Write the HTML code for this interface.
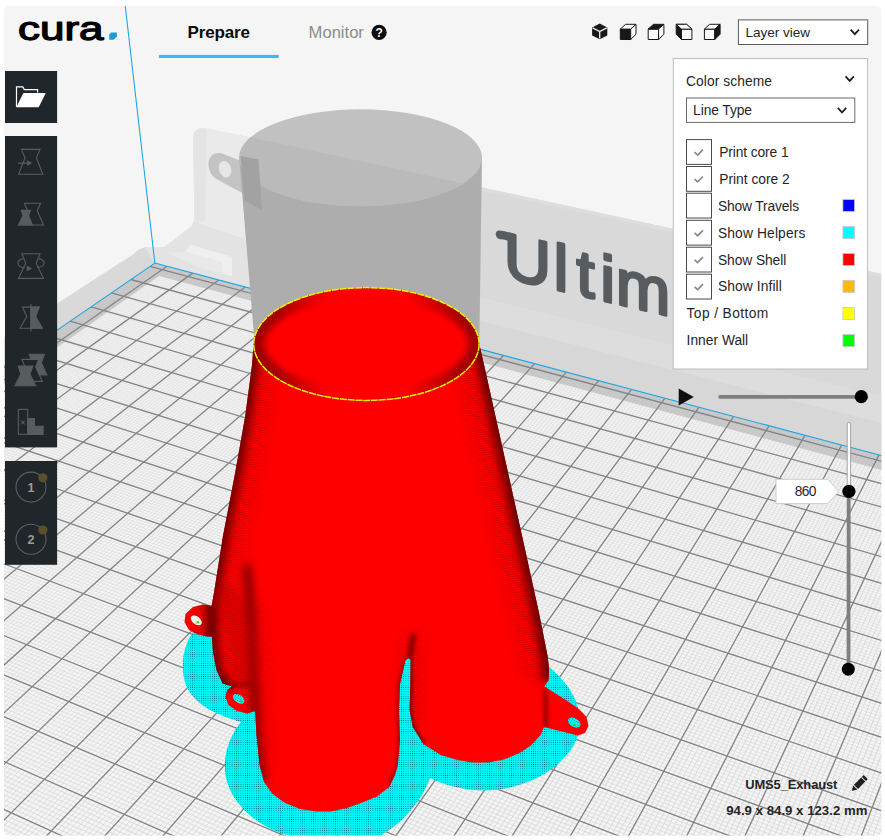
<!DOCTYPE html>
<html lang="en"><head><meta charset="utf-8"><title>Cura - UMS5_Exhaust</title>
<style>
html,body{margin:0;padding:0;background:#fff;width:885px;height:840px;overflow:hidden}
svg{display:block;position:absolute;left:0;top:0}
text{font-family:"Liberation Sans",Arial,sans-serif}
</style></head><body>
<svg width="885" height="840" viewBox="0 0 885 840">
<defs><clipPath id="win"><rect x="4" y="6" width="877.3" height="829.5" rx="5" ry="5"/></clipPath></defs>
<g clip-path="url(#win)">
<rect x="0" y="0" width="885" height="840" fill="#f5f5f5"/>
<polygon points="0.0,340.4 57.0,303.5 132.1,255.0 138.5,249.8 145.0,247.0 163.5,247.4 175.2,238.9 192.5,225.2 194.6,219.0 193.3,138.0 194.6,132.0 199.0,128.6 204.0,128.3 260.0,139.4 481.2,187.3 885.0,274.7 885.0,470.0 0.0,470.0" fill="#d9d9d9"/>
<polygon points="193.3,138.0 194.6,132.0 199.0,128.6 204.0,128.3 256.0,138.5 256.0,246.0 245.0,239.0 208.8,227.6 194.3,221.0" fill="#eaeaea"/>
<polygon points="193.3,138.0 194.6,132.0 199.0,128.6 204.0,128.3 206.5,129.5 205.0,222.0 194.3,221.0" fill="#e4e4e4"/>
<polygon points="145.0,247.0 163.5,247.4 175.2,238.9 192.5,225.2 194.3,221.0 208.8,227.6 245.0,239.0 256.0,246.0 256.0,292.0 154.0,263.1" fill="#e3e3e3"/>
<polygon points="186.0,252.0 190.0,244.5 232.0,257.0 232.0,276.0 222.0,273.5 222.0,262.0" fill="#efefef"/>
<polygon points="166.0,252.5 186.0,252.0 222.0,262.0 222.0,273.5 200.0,268.0" fill="#e9e9e9"/>
<polygon points="470.0,184.9 885.0,274.7 885.0,278.2 470.0,188.4" fill="#dddddd"/>
<polygon points="470.0,294.8 885.0,397.3 885.0,424.0 470.0,318.2" fill="#dddddd"/>
<polygon points="470.0,318.2 885.0,424.0 885.0,456.1 470.0,346.5" fill="#d7d7d7"/>
<clipPath id="plate"><polygon points="154.8,263.1 1273.4,559.4 1147.6,1620.9 -539.0,739.2"/></clipPath>
<g clip-path="url(#plate)">
<polygon points="154.8,263.1 1273.4,559.4 1147.6,1620.9 -539.0,739.2" fill="#f4f4f4"/>
<g stroke="#d6d6d7" fill="none">
<path stroke-width="0.3" d="M153.7,263.8L329.3,310.4M329.3,310.4L524.9,362.3M151.8,265.1L327.6,311.8M327.6,311.8L523.4,363.9M148.1,267.7L324.2,314.7M324.2,314.7L520.4,367.1M146.2,269.0L322.4,316.1M322.4,316.1L519.0,368.7M144.3,270.3L320.7,317.6M320.7,317.6L517.5,370.3M142.4,271.6L319.0,319.0M319.0,319.0L516.0,371.9M140.5,272.9L317.3,320.5M317.3,320.5L514.5,373.5M138.6,274.2L315.5,321.9M136.7,275.5L313.8,323.4M134.8,276.8L312.1,324.9M132.8,278.2L310.3,326.3M129.0,280.8L306.8,329.3M127.0,282.1L305.0,330.8M125.1,283.5L303.3,332.3M123.1,284.8L301.5,333.7M121.2,286.2L299.7,335.2M119.2,287.5L297.9,336.8M117.2,288.9L296.1,338.3M115.2,290.2L294.3,339.8M113.3,291.6L292.5,341.3"/>
<path stroke-width="0.35" d="M156.9,263.6L60.8,329.7M159.4,264.3L63.4,330.5M162.0,265.0L66.1,331.3M164.5,265.6L68.7,332.1M169.6,267.0L74.0,333.6M172.1,267.6L76.7,334.4M174.7,268.3L79.4,335.2M177.2,269.0L82.0,336.0M179.8,269.7L84.7,336.8M182.4,270.4L87.4,337.6M184.9,271.0L90.1,338.4M187.5,271.7L92.8,339.1M190.1,272.4L95.5,339.9M195.2,273.8L100.9,341.5M197.8,274.5L103.6,342.3M200.4,275.1L106.3,343.1M203.0,275.8L109.0,343.9M205.6,276.5L111.7,344.7M208.2,277.2L114.4,345.5M210.8,277.9L117.2,346.3M213.4,278.6L119.9,347.1M216.1,279.3L122.7,347.9M221.3,280.7L128.2,349.5M524.9,362.3L744.1,420.5M744.1,420.5L991.6,486.1M523.4,363.9L743.0,422.2M743.0,422.2L990.9,488.1M520.4,367.1L740.6,425.8M740.6,425.8L989.3,492.2M519.0,368.7L739.4,427.7M739.4,427.7L988.5,494.3M517.5,370.3L738.2,429.5M738.2,429.5L987.7,496.3M516.0,371.9L737.0,431.3M737.0,431.3L986.9,498.4M514.5,373.5L735.8,433.1M735.8,433.1L986.1,500.5M315.5,321.9L513.0,375.2M513.0,375.2L734.6,435.0M734.6,435.0L985.3,502.6M313.8,323.4L511.5,376.8M511.5,376.8L733.4,436.8M733.4,436.8L984.5,504.6M312.1,324.9L510.0,378.5M510.0,378.5L732.2,438.6M732.2,438.6L983.7,506.7M310.3,326.3L508.4,380.1M508.4,380.1L731.0,440.5M731.0,440.5L982.9,508.9M306.8,329.3L505.4,383.4M505.4,383.4L728.6,444.2M728.6,444.2L981.2,513.1M305.0,330.8L503.9,385.1M503.9,385.1L727.4,446.1M303.3,332.3L502.3,386.7M502.3,386.7L726.1,448.0M301.5,333.7L500.8,388.4M500.8,388.4L724.9,449.9M299.7,335.2L499.2,390.1M499.2,390.1L723.6,451.8M297.9,336.8L497.7,391.8M497.7,391.8L722.4,453.7M296.1,338.3L496.1,393.5M496.1,393.5L721.2,455.6M294.3,339.8L494.6,395.2M494.6,395.2L719.9,457.5M292.5,341.3L493.0,396.9M493.0,396.9L718.6,459.4M109.3,294.3L288.9,344.3M288.9,344.3L489.8,400.3M489.8,400.3L716.1,463.3M107.3,295.7L287.1,345.9M287.1,345.9L488.2,402.0M488.2,402.0L714.8,465.2M105.3,297.1L285.2,347.4M285.2,347.4L486.7,403.7M486.7,403.7L713.6,467.2M103.2,298.5L283.4,349.0M283.4,349.0L485.1,405.5M485.1,405.5L712.3,469.1M101.2,299.9L281.6,350.5M281.6,350.5L483.5,407.2M483.5,407.2L711.0,471.1M99.2,301.2L279.7,352.1M279.7,352.1L481.9,408.9M481.9,408.9L709.7,473.1M97.2,302.6L277.9,353.6M277.9,353.6L480.2,410.7M480.2,410.7L708.4,475.1M95.1,304.0L276.0,355.2M276.0,355.2L478.6,412.5M478.6,412.5L707.1,477.1M93.1,305.4L274.1,356.7M274.1,356.7L477.0,414.2M89.0,308.3L270.4,359.9M270.4,359.9L473.7,417.8M86.9,309.7L268.5,361.5M268.5,361.5L472.1,419.5M84.8,311.1L266.6,363.1M266.6,363.1L470.4,421.3M82.7,312.5L264.7,364.7M264.7,364.7L468.8,423.1M80.7,314.0L262.8,366.3M262.8,366.3L467.1,424.9M78.6,315.4L260.9,367.9M260.9,367.9L465.5,426.7M76.5,316.8L259.0,369.5M259.0,369.5L463.8,428.5M74.4,318.3L257.1,371.1M257.1,371.1L462.1,430.4M72.2,319.7L255.1,372.7M255.1,372.7L460.4,432.2M68.0,322.6L251.3,376.0M251.3,376.0L457.0,435.9M65.9,324.1L249.3,377.6M249.3,377.6L455.3,437.7M63.7,325.6L247.4,379.3M247.4,379.3L453.6,439.6M61.6,327.0L245.4,380.9M245.4,380.9L451.9,441.4M59.4,328.5L243.4,382.6M57.3,330.0L241.5,384.2M55.1,331.5L239.5,385.9M52.9,333.0L237.5,387.6M50.8,334.5L235.5,389.2M46.4,337.5L231.5,392.6M44.2,339.0L229.5,394.3M42.0,340.5L227.5,396.0M39.8,342.0L225.4,397.7M37.5,343.6L223.4,399.4M35.3,345.1L221.4,401.1M33.1,346.6L219.3,402.9M30.8,348.2L217.2,404.6M28.6,349.7L215.2,406.3"/>
<path stroke-width="0.4" d="M60.8,329.7L-51.3,406.9M63.4,330.5L-48.6,407.8M66.1,331.3L-45.8,408.7M68.7,332.1L-43.0,409.6M74.0,333.6L-37.5,411.4M76.7,334.4L-34.7,412.3M79.4,335.2L-31.9,413.3M82.0,336.0L-29.1,414.2M84.7,336.8L-26.3,415.1M87.4,337.6L-23.5,416.0M90.1,338.4L-20.7,417.0M92.8,339.1L-17.9,417.9M95.5,339.9L-15.1,418.8M100.9,341.5L-9.4,420.7M103.6,342.3L-6.6,421.6M106.3,343.1L-3.7,422.6M109.0,343.9L-0.9,423.5M111.7,344.7L2.0,424.4M114.4,345.5L4.8,425.4M117.2,346.3L7.7,426.3M119.9,347.1L10.5,427.3M122.7,347.9L13.4,428.2M128.2,349.5L19.2,430.1M223.9,281.4L130.9,350.4M130.9,350.4L22.1,431.1M226.6,282.1L133.7,351.2M133.7,351.2L25.0,432.0M229.2,282.8L136.4,352.0M136.4,352.0L27.9,433.0M231.8,283.5L139.2,352.8M139.2,352.8L30.8,433.9M234.5,284.2L142.0,353.6M142.0,353.6L33.7,434.9M237.1,284.9L144.8,354.4M144.8,354.4L36.6,435.9M239.8,285.6L147.5,355.2M147.5,355.2L39.5,436.8M242.4,286.3L150.3,356.1M150.3,356.1L42.4,437.8M247.8,287.7L155.9,357.7M155.9,357.7L48.3,439.7M250.4,288.4L158.7,358.5M158.7,358.5L51.2,440.7M253.1,289.1L161.5,359.4M161.5,359.4L54.2,441.7M255.8,289.8L164.3,360.2M164.3,360.2L57.2,442.7M258.5,290.5L167.2,361.0M167.2,361.0L60.1,443.6M261.2,291.2L170.0,361.8M170.0,361.8L63.1,444.6M263.9,291.9L172.8,362.7M172.8,362.7L66.0,445.6M266.6,292.7L175.6,363.5M269.3,293.4L178.5,364.3M274.7,294.8L184.2,366.0M277.4,295.5L187.0,366.8M280.1,296.3L189.9,367.7M282.8,297.0L192.7,368.5M285.6,297.7L195.6,369.4M288.3,298.4L198.5,370.2M291.0,299.1L201.3,371.1M293.8,299.9L204.2,371.9M296.5,300.6L207.1,372.8M302.0,302.1L212.9,374.5M304.8,302.8L215.8,375.3M307.5,303.5L218.7,376.2M310.3,304.2L221.6,377.0M313.1,305.0L224.5,377.9M315.8,305.7L227.5,378.7M318.6,306.5L230.4,379.6M321.4,307.2L233.3,380.5M324.2,307.9L236.3,381.3M329.8,309.4L242.2,383.1M332.6,310.2L245.1,383.9M335.4,310.9L248.1,384.8M338.2,311.6L251.0,385.7M341.0,312.4L254.0,386.5M343.9,313.1L257.0,387.4M727.4,446.1L980.4,515.2M726.1,448.0L979.6,517.4M724.9,449.9L978.7,519.5M723.6,451.8L977.9,521.7M722.4,453.7L977.1,523.8M721.2,455.6L976.2,526.0M719.9,457.5L975.4,528.2M718.6,459.4L974.6,530.4M716.1,463.3L972.9,534.8M714.8,465.2L972.0,537.0M713.6,467.2L971.1,539.2M712.3,469.1L970.3,541.4M711.0,471.1L969.4,543.7M709.7,473.1L968.5,545.9M708.4,475.1L967.7,548.2M707.1,477.1L966.8,550.5M477.0,414.2L705.8,479.0M705.8,479.0L965.9,552.7M473.7,417.8L703.2,483.1M703.2,483.1L964.1,557.3M472.1,419.5L701.9,485.1M701.9,485.1L963.3,559.6M470.4,421.3L700.5,487.1M700.5,487.1L962.4,561.9M468.8,423.1L699.2,489.1M699.2,489.1L961.5,564.3M467.1,424.9L697.9,491.2M697.9,491.2L960.6,566.6M465.5,426.7L696.5,493.2M696.5,493.2L959.7,568.9M463.8,428.5L695.2,495.3M695.2,495.3L958.7,571.3M462.1,430.4L693.8,497.3M693.8,497.3L957.8,573.6M460.4,432.2L692.5,499.4M692.5,499.4L956.9,576.0M457.0,435.9L689.8,503.6M689.8,503.6L955.1,580.8M455.3,437.7L688.4,505.7M688.4,505.7L954.2,583.2M453.6,439.6L687.0,507.8M687.0,507.8L953.2,585.6M451.9,441.4L685.6,509.9M243.4,382.6L450.2,443.3M450.2,443.3L684.3,512.0M241.5,384.2L448.5,445.1M448.5,445.1L682.9,514.1M239.5,385.9L446.8,447.0M446.8,447.0L681.5,516.3M237.5,387.6L445.0,448.9M445.0,448.9L680.1,518.4M235.5,389.2L443.3,450.8M443.3,450.8L678.7,520.6M231.5,392.6L439.8,454.6M439.8,454.6L675.8,524.9M229.5,394.3L438.0,456.5M438.0,456.5L674.4,527.1M227.5,396.0L436.2,458.4M436.2,458.4L673.0,529.2M225.4,397.7L434.5,460.4M434.5,460.4L671.5,531.4M223.4,399.4L432.7,462.3M432.7,462.3L670.1,533.6M221.4,401.1L430.9,464.2M430.9,464.2L668.7,535.9M219.3,402.9L429.1,466.2M429.1,466.2L667.2,538.1M217.2,404.6L427.3,468.1M427.3,468.1L665.7,540.3M215.2,406.3L425.5,470.1M425.5,470.1L664.3,542.5M24.0,352.8L211.0,409.8M211.0,409.8L421.8,474.1M21.8,354.4L208.9,411.6M208.9,411.6L420.0,476.0M19.5,355.9L206.9,413.3M206.9,413.3L418.2,478.0M17.2,357.5L204.8,415.1M204.8,415.1L416.3,480.0M14.9,359.1L202.6,416.9M202.6,416.9L414.5,482.0M12.6,360.7L200.5,418.6M200.5,418.6L412.6,484.0M10.3,362.3L198.4,420.4M198.4,420.4L410.8,486.1M8.0,363.8L196.3,422.2M196.3,422.2L408.9,488.1M5.6,365.4L194.1,424.0M194.1,424.0L407.0,490.1M1.0,368.7L189.8,427.6M189.8,427.6L403.3,494.2M-1.4,370.3L187.7,429.4M187.7,429.4L401.4,496.3M-3.7,371.9L185.5,431.3M185.5,431.3L399.4,498.4M-6.1,373.5L183.3,433.1M183.3,433.1L397.5,500.4M-8.5,375.1L181.2,434.9M181.2,434.9L395.6,502.5M-10.9,376.8L179.0,436.8M-13.3,378.4L176.8,438.6M-15.7,380.1L174.6,440.5M-18.1,381.7L172.4,442.3M-22.9,385.0L167.9,446.1M-25.3,386.7L165.7,447.9M-27.8,388.4L163.4,449.8M-30.2,390.1L161.2,451.7M-32.7,391.7L158.9,453.6M-35.1,393.4L156.6,455.5M-37.6,395.1L154.4,457.5M-40.1,396.8L152.1,459.4M-42.6,398.5L149.8,461.3M-47.6,402.0L145.2,465.2"/>
<path stroke-width="0.45" d="M2.0,424.4L-128.1,518.9M4.8,425.4L-125.1,520.0M7.7,426.3L-122.1,521.1M10.5,427.3L-119.1,522.3M13.4,428.2L-116.1,523.4M19.2,430.1L-110.0,525.7M22.1,431.1L-107.0,526.8M25.0,432.0L-104.0,527.9M27.9,433.0L-100.9,529.1M30.8,433.9L-97.9,530.2M33.7,434.9L-94.8,531.4M36.6,435.9L-91.8,532.5M39.5,436.8L-88.7,533.7M42.4,437.8L-85.7,534.8M48.3,439.7L-79.5,537.2M51.2,440.7L-76.4,538.3M54.2,441.7L-73.3,539.5M57.2,442.7L-70.2,540.7M60.1,443.6L-67.1,541.8M63.1,444.6L-64.0,543.0M66.0,445.6L-60.9,544.2M175.6,363.5L69.0,446.6M69.0,446.6L-57.7,545.3M178.5,364.3L72.0,447.6M72.0,447.6L-54.6,546.5M184.2,366.0L78.0,449.5M78.0,449.5L-48.3,548.9M187.0,366.8L81.0,450.5M81.0,450.5L-45.2,550.1M189.9,367.7L84.0,451.5M84.0,451.5L-42.0,551.3M192.7,368.5L87.0,452.5M87.0,452.5L-38.8,552.5M195.6,369.4L90.0,453.5M90.0,453.5L-35.7,553.6M198.5,370.2L93.0,454.5M93.0,454.5L-32.5,554.8M201.3,371.1L96.1,455.5M204.2,371.9L99.1,456.5M207.1,372.8L102.1,457.5M212.9,374.5L108.2,459.5M215.8,375.3L111.3,460.5M218.7,376.2L114.3,461.5M221.6,377.0L117.4,462.5M224.5,377.9L120.5,463.6M227.5,378.7L123.6,464.6M230.4,379.6L126.6,465.6M233.3,380.5L129.7,466.6M236.3,381.3L132.8,467.6M242.2,383.1L139.0,469.7M245.1,383.9L142.2,470.7M248.1,384.8L145.3,471.7M251.0,385.7L148.4,472.8M254.0,386.5L151.5,473.8M257.0,387.4L154.7,474.8M346.7,313.9L260.0,388.3M260.0,388.3L157.8,475.9M349.5,314.6L262.9,389.2M262.9,389.2L161.0,476.9M352.3,315.4L265.9,390.0M265.9,390.0L164.1,478.0M358.0,316.9L271.9,391.8M271.9,391.8L170.5,480.1M360.9,317.7L274.9,392.7M274.9,392.7L173.6,481.1M363.7,318.4L277.9,393.6M277.9,393.6L176.8,482.2M366.6,319.2L281.0,394.5M281.0,394.5L180.0,483.2M369.5,319.9L284.0,395.3M284.0,395.3L183.2,484.3M372.3,320.7L287.0,396.2M287.0,396.2L186.4,485.3M375.2,321.4L290.0,397.1M378.1,322.2L293.1,398.0M381.0,323.0L296.1,398.9M386.7,324.5L302.2,400.7M389.6,325.3L305.3,401.6M392.5,326.0L308.4,402.5M395.5,326.8L311.4,403.4M398.4,327.6L314.5,404.3M401.3,328.4L317.6,405.2M404.2,329.1L320.7,406.1M407.1,329.9L323.8,407.0M410.1,330.7L326.9,408.0M415.9,332.2L333.1,409.8M418.9,333.0L336.2,410.7M421.8,333.8L339.3,411.6M424.8,334.6L342.5,412.5M427.8,335.4L345.6,413.5M430.7,336.1L348.7,414.4M433.7,336.9L351.9,415.3M436.7,337.7L355.0,416.2M439.6,338.5L358.2,417.2M445.6,340.1L364.5,419.0M448.6,340.9L367.7,419.9M451.6,341.7L370.9,420.9M454.6,342.5L374.0,421.8M685.6,509.9L952.3,588.0M684.3,512.0L951.4,590.4M682.9,514.1L950.4,592.9M681.5,516.3L949.5,595.3M680.1,518.4L948.5,597.8M678.7,520.6L947.6,600.2M675.8,524.9L945.6,605.2M674.4,527.1L944.7,607.7M673.0,529.2L943.7,610.2M671.5,531.4L942.7,612.7M670.1,533.6L941.8,615.3M668.7,535.9L940.8,617.8M667.2,538.1L939.8,620.4M665.7,540.3L938.8,622.9M664.3,542.5L937.8,625.5M421.8,474.1L661.3,547.0M661.3,547.0L935.8,630.7M420.0,476.0L659.9,549.3M659.9,549.3L934.8,633.3M418.2,478.0L658.4,551.6M658.4,551.6L933.8,635.9M416.3,480.0L656.9,553.9M656.9,553.9L932.8,638.5M414.5,482.0L655.4,556.1M655.4,556.1L931.8,641.2M412.6,484.0L653.9,558.4M653.9,558.4L930.7,643.8M410.8,486.1L652.4,560.8M652.4,560.8L929.7,646.5M408.9,488.1L650.9,563.1M650.9,563.1L928.7,649.2M407.0,490.1L649.3,565.4M649.3,565.4L927.6,651.8M403.3,494.2L646.3,570.1M401.4,496.3L644.7,572.4M399.4,498.4L643.2,574.8M397.5,500.4L641.6,577.2M395.6,502.5L640.1,579.6M179.0,436.8L393.7,504.6M393.7,504.6L638.5,582.0M176.8,438.6L391.8,506.7M391.8,506.7L636.9,584.4M174.6,440.5L389.8,508.8M389.8,508.8L635.4,586.8M172.4,442.3L387.9,510.9M387.9,510.9L633.8,589.2M167.9,446.1L383.9,515.2M383.9,515.2L630.6,594.1M165.7,447.9L382.0,517.3M382.0,517.3L629.0,596.5M163.4,449.8L380.0,519.5M380.0,519.5L627.4,599.0M161.2,451.7L378.0,521.6M378.0,521.6L625.8,601.5M158.9,453.6L376.0,523.8M376.0,523.8L624.1,603.9M156.6,455.5L374.0,525.9M374.0,525.9L622.5,606.4M154.4,457.5L372.0,528.1M152.1,459.4L370.0,530.3M149.8,461.3L368.0,532.5M145.2,465.2L363.9,536.9M-50.1,403.7L142.8,467.1M142.8,467.1L361.8,539.2M-52.6,405.4L140.5,469.1M140.5,469.1L359.8,541.4M-55.2,407.2L138.2,471.1M138.2,471.1L357.7,543.6M-57.7,408.9L135.8,473.0M135.8,473.0L355.6,545.9M-60.2,410.7L133.5,475.0M133.5,475.0L353.6,548.1M-62.8,412.4L131.1,477.0M131.1,477.0L351.5,550.4M-65.4,414.2L128.7,479.0M128.7,479.0L349.4,552.7M-67.9,415.9L126.3,481.0M126.3,481.0L347.3,555.0M-73.1,419.5L121.6,485.0M121.6,485.0L343.0,559.6M-75.7,421.3L119.1,487.1M119.1,487.1L340.9,561.9M-78.3,423.1L116.7,489.1M-81.0,424.9L114.3,491.1M-83.6,426.7L111.9,493.2M-86.2,428.5L109.4,495.2M-88.9,430.3L107.0,497.3M-91.6,432.1L104.5,499.4M-94.2,434.0L102.0,501.4M-99.6,437.7L97.1,505.6M-102.3,439.5L94.6,507.7M-105.0,441.4L92.1,509.8M-107.7,443.2L89.5,512.0M-110.4,445.1L87.0,514.1M-113.2,447.0L84.5,516.2M-115.9,448.9L81.9,518.4"/>
<path stroke-width="0.5" d="M96.1,455.5L-29.3,556.0M99.1,456.5L-26.1,557.2M102.1,457.5L-22.9,558.4M108.2,459.5L-16.5,560.9M111.3,460.5L-13.3,562.1M114.3,461.5L-10.1,563.3M117.4,462.5L-6.8,564.5M120.5,463.6L-3.6,565.7M123.6,464.6L-0.3,566.9M126.6,465.6L2.9,568.2M129.7,466.6L6.2,569.4M132.8,467.6L9.4,570.6M139.0,469.7L16.0,573.1M142.2,470.7L19.3,574.3M145.3,471.7L22.6,575.6M148.4,472.8L25.9,576.8M151.5,473.8L29.2,578.0M154.7,474.8L32.5,579.3M157.8,475.9L35.8,580.5M161.0,476.9L39.1,581.8M164.1,478.0L42.5,583.1M170.5,480.1L49.2,585.6M173.6,481.1L52.5,586.8M176.8,482.2L55.9,588.1M180.0,483.2L59.3,589.4M183.2,484.3L62.6,590.6M186.4,485.3L66.0,591.9M290.0,397.1L189.6,486.4M189.6,486.4L69.4,593.2M293.1,398.0L192.8,487.4M192.8,487.4L72.8,594.5M296.1,398.9L196.0,488.5M196.0,488.5L76.2,595.8M302.2,400.7L202.5,490.6M305.3,401.6L205.7,491.7M308.4,402.5L209.0,492.8M311.4,403.4L212.2,493.8M314.5,404.3L215.5,494.9M317.6,405.2L218.8,496.0M320.7,406.1L222.0,497.1M323.8,407.0L225.3,498.2M326.9,408.0L228.6,499.2M333.1,409.8L235.2,501.4M336.2,410.7L238.5,502.5M339.3,411.6L241.8,503.6M342.5,412.5L245.1,504.7M345.6,413.5L248.4,505.8M348.7,414.4L251.8,506.9M351.9,415.3L255.1,508.0M355.0,416.2L258.4,509.1M358.2,417.2L261.8,510.2M364.5,419.0L268.5,512.4M367.7,419.9L271.9,513.5M370.9,420.9L275.2,514.6M374.0,421.8L278.6,515.8M457.6,343.3L377.2,422.8M377.2,422.8L282.0,516.9M460.7,344.1L380.4,423.7M380.4,423.7L285.4,518.0M463.7,344.9L383.6,424.6M383.6,424.6L288.8,519.1M466.7,345.7L386.8,425.6M386.8,425.6L292.2,520.2M469.7,346.5L390.1,426.5M390.1,426.5L295.6,521.4M475.8,348.1L396.5,428.4M478.9,348.9L399.7,429.4M481.9,349.7L403.0,430.3M485.0,350.5L406.2,431.3M488.0,351.3L409.5,432.2M491.1,352.1L412.7,433.2M494.2,353.0L416.0,434.1M497.3,353.8L419.3,435.1M500.3,354.6L422.5,436.1M506.5,356.2L429.1,438.0M509.6,357.1L432.4,439.0M512.7,357.9L435.7,439.9M515.8,358.7L439.0,440.9M519.0,359.5L442.3,441.9M522.1,360.4L445.6,442.9M525.2,361.2L449.0,443.8M528.3,362.0L452.3,444.8M531.5,362.8L455.6,445.8M537.8,364.5L462.3,447.8M540.9,365.3L465.7,448.7M544.1,366.2L469.0,449.7M547.2,367.0L472.4,450.7M550.4,367.9L475.8,451.7M553.6,368.7L479.2,452.7M556.8,369.5L482.5,453.7M560.0,370.4L485.9,454.7M646.3,570.1L925.5,657.3M644.7,572.4L924.5,660.0M643.2,574.8L923.4,662.7M641.6,577.2L922.4,665.4M640.1,579.6L921.3,668.2M638.5,582.0L920.2,671.0M636.9,584.4L919.2,673.8M635.4,586.8L918.1,676.5M633.8,589.2L917.0,679.3M630.6,594.1L914.8,685.0M629.0,596.5L913.7,687.8M627.4,599.0L912.6,690.7M625.8,601.5L911.5,693.6M624.1,603.9L910.4,696.4M622.5,606.4L909.3,699.3M372.0,528.1L620.9,608.9M620.9,608.9L908.2,702.2M370.0,530.3L619.2,611.5M619.2,611.5L907.0,705.2M368.0,532.5L617.6,614.0M617.6,614.0L905.9,708.1M363.9,536.9L614.2,619.1M614.2,619.1L903.6,714.0M361.8,539.2L612.6,621.6M612.6,621.6L902.5,717.0M359.8,541.4L610.9,624.2M357.7,543.6L609.2,626.8M355.6,545.9L607.5,629.4M353.6,548.1L605.8,632.0M351.5,550.4L604.1,634.6M349.4,552.7L602.4,637.2M347.3,555.0L600.7,639.8M343.0,559.6L597.2,645.1M340.9,561.9L595.5,647.8M116.7,489.1L338.7,564.2M338.7,564.2L593.7,650.5M114.3,491.1L336.6,566.5M336.6,566.5L591.9,653.2M111.9,493.2L334.4,568.9M334.4,568.9L590.2,655.9M109.4,495.2L332.3,571.2M332.3,571.2L588.4,658.6M107.0,497.3L330.1,573.6M330.1,573.6L586.6,661.3M104.5,499.4L327.9,576.0M327.9,576.0L584.8,664.0M102.0,501.4L325.7,578.3M325.7,578.3L583.0,666.8M97.1,505.6L321.3,583.1M94.6,507.7L319.1,585.5M92.1,509.8L316.9,588.0M89.5,512.0L314.6,590.4M87.0,514.1L312.4,592.8M84.5,516.2L310.1,595.3M81.9,518.4L307.9,597.7M-118.7,450.8L79.4,520.5M79.4,520.5L305.6,600.2M-121.4,452.7L76.8,522.7M76.8,522.7L303.3,602.7M-127.0,456.5L71.6,527.0M71.6,527.0L298.7,607.7M-129.8,458.4L69.0,529.2M69.0,529.2L296.4,610.2M-132.6,460.3L66.4,531.4M66.4,531.4L294.1,612.7M-135.4,462.3L63.8,533.6M63.8,533.6L291.7,615.2M-138.3,464.2L61.2,535.8M61.2,535.8L289.4,617.8M-141.1,466.1L58.5,538.0M-143.9,468.1L55.9,540.3M-146.8,470.1L53.2,542.5M-149.7,472.0L50.5,544.7M-155.4,476.0L45.2,549.2M-158.3,478.0L42.5,551.5M-161.3,480.0L39.8,553.8M-164.2,482.0L37.0,556.1M-167.1,484.0L34.3,558.4M-170.1,486.0L31.6,560.7M-173.0,488.0L28.8,563.0M-176.0,490.1L26.0,565.3M-179.0,492.1L23.2,567.7"/>
<path stroke-width="0.55" d="M2.9,568.2L-147.2,692.6M6.2,569.4L-143.8,694.1M9.4,570.6L-140.3,695.6M16.0,573.1L-133.4,698.6M19.3,574.3L-130.0,700.2M22.6,575.6L-126.5,701.7M25.9,576.8L-123.0,703.2M29.2,578.0L-119.5,704.7M32.5,579.3L-116.0,706.3M35.8,580.5L-112.5,707.8M39.1,581.8L-109.0,709.3M42.5,583.1L-105.5,710.9M49.2,585.6L-98.4,714.0M52.5,586.8L-94.9,715.5M55.9,588.1L-91.3,717.1M59.3,589.4L-87.8,718.6M62.6,590.6L-84.2,720.2M66.0,591.9L-80.6,721.8M69.4,593.2L-77.0,723.3M202.5,490.6L83.1,598.3M205.7,491.7L86.5,599.6M209.0,492.8L89.9,600.9M212.2,493.8L93.4,602.2M215.5,494.9L96.8,603.5M218.8,496.0L100.3,604.8M222.0,497.1L103.8,606.1M225.3,498.2L107.2,607.4M228.6,499.2L110.7,608.7M235.2,501.4L117.7,611.4M238.5,502.5L121.2,612.7M241.8,503.6L124.7,614.0M245.1,504.7L128.2,615.3M248.4,505.8L131.8,616.7M251.8,506.9L135.3,618.0M255.1,508.0L138.9,619.3M258.4,509.1L142.4,620.7M261.8,510.2L146.0,622.0M268.5,512.4L153.1,624.7M271.9,513.5L156.7,626.0M275.2,514.6L160.3,627.4M278.6,515.8L163.9,628.7M282.0,516.9L167.5,630.1M285.4,518.0L171.1,631.4M288.8,519.1L174.7,632.8M292.2,520.2L178.3,634.2M295.6,521.4L182.0,635.5M396.5,428.4L302.5,523.6M399.7,429.4L305.9,524.8M403.0,430.3L309.4,525.9M406.2,431.3L312.8,527.0M409.5,432.2L316.3,528.2M412.7,433.2L319.8,529.3M416.0,434.1L323.2,530.5M419.3,435.1L326.7,531.6M422.5,436.1L330.2,532.8M429.1,438.0L337.2,535.1M432.4,439.0L340.7,536.2M435.7,439.9L344.2,537.4M439.0,440.9L347.7,538.6M442.3,441.9L351.3,539.7M445.6,442.9L354.8,540.9M449.0,443.8L358.3,542.1M452.3,444.8L361.9,543.2M455.6,445.8L365.5,544.4M462.3,447.8L372.6,546.8M465.7,448.7L376.2,547.9M469.0,449.7L379.8,549.1M472.4,450.7L383.4,550.3M475.8,451.7L387.0,551.5M479.2,452.7L390.6,552.7M482.5,453.7L394.2,553.9M485.9,454.7L397.8,555.1M563.1,371.2L489.3,455.7M489.3,455.7L401.5,556.3M569.5,372.9L496.2,457.7M572.8,373.8L499.6,458.7M576.0,374.6L503.0,459.7M579.2,375.5L506.4,460.7M582.4,376.3L509.9,461.7M585.6,377.2L513.3,462.8M588.9,378.1L516.8,463.8M592.1,378.9L520.2,464.8M595.4,379.8L523.7,465.8M601.9,381.5L530.7,467.8M605.2,382.4L534.1,468.9M608.4,383.2L537.6,469.9M611.7,384.1L541.1,470.9M615.0,385.0L544.6,472.0M618.3,385.8L548.1,473.0M621.6,386.7L551.7,474.0M624.9,387.6L555.2,475.1M628.2,388.5L558.7,476.1M634.8,390.2L565.8,478.2M638.1,391.1L569.4,479.2M641.5,392.0L572.9,480.3M644.8,392.9L576.5,481.3M648.2,393.8L580.1,482.4M651.5,394.6L583.6,483.4M654.9,395.5L587.2,484.5M658.2,396.4L590.8,485.5M661.6,397.3L594.4,486.6M610.9,624.2L901.3,719.9M609.2,626.8L900.2,722.9M607.5,629.4L899.0,726.0M605.8,632.0L897.8,729.0M604.1,634.6L896.7,732.0M602.4,637.2L895.5,735.1M600.7,639.8L894.3,738.1M597.2,645.1L891.9,744.3M595.5,647.8L890.7,747.4M593.7,650.5L889.5,750.6M591.9,653.2L888.3,753.7M590.2,655.9L887.1,756.9M588.4,658.6L885.8,760.0M586.6,661.3L884.6,763.2M584.8,664.0L883.4,766.4M583.0,666.8L882.1,769.6M321.3,583.1L579.4,672.3M579.4,672.3L879.6,776.1M319.1,585.5L577.6,675.1M577.6,675.1L878.4,779.4M316.9,588.0L575.8,677.9M314.6,590.4L573.9,680.7M312.4,592.8L572.1,683.5M310.1,595.3L570.2,686.4M307.9,597.7L568.4,689.2M305.6,600.2L566.5,692.1M303.3,602.7L564.6,695.0M298.7,607.7L560.8,700.7M296.4,610.2L558.9,703.7M294.1,612.7L557.0,706.6M291.7,615.2L555.1,709.5M289.4,617.8L553.2,712.5M58.5,538.0L287.0,620.3M287.0,620.3L551.2,715.4M55.9,540.3L284.7,622.9M284.7,622.9L549.3,718.4M53.2,542.5L282.3,625.4M282.3,625.4L547.3,721.4M50.5,544.7L279.9,628.0M279.9,628.0L545.3,724.4M45.2,549.2L275.1,633.2M42.5,551.5L272.7,635.8M39.8,553.8L270.3,638.5M37.0,556.1L267.9,641.1M34.3,558.4L265.4,643.8M31.6,560.7L263.0,646.4M28.8,563.0L260.5,649.1M26.0,565.3L258.0,651.8M23.2,567.7L255.5,654.5M-184.9,496.2L17.7,572.4M17.7,572.4L250.5,659.9M-188.0,498.3L14.8,574.7M14.8,574.7L248.0,662.6M-191.0,500.4L12.0,577.1M12.0,577.1L245.5,665.4M-194.0,502.5L9.2,579.5M9.2,579.5L243.0,668.1M-197.1,504.5L6.3,581.9M6.3,581.9L240.4,670.9M-200.1,506.6L3.5,584.3M-203.2,508.8L0.6,586.7"/>
<path stroke-width="0.6" d="M72.8,594.5L-73.4,724.9M76.2,595.8L-69.8,726.5M83.1,598.3L-62.6,729.7M86.5,599.6L-58.9,731.2M89.9,600.9L-55.3,732.8M93.4,602.2L-51.7,734.4M96.8,603.5L-48.0,736.0M100.3,604.8L-44.3,737.6M103.8,606.1L-40.6,739.2M107.2,607.4L-37.0,740.9M110.7,608.7L-33.3,742.5M117.7,611.4L-25.9,745.7M121.2,612.7L-22.1,747.3M124.7,614.0L-18.4,749.0M128.2,615.3L-14.7,750.6M131.8,616.7L-10.9,752.3M135.3,618.0L-7.2,753.9M138.9,619.3L-3.4,755.6M142.4,620.7L0.4,757.2M146.0,622.0L4.2,758.9M153.1,624.7L11.8,762.2M156.7,626.0L15.6,763.9M160.3,627.4L19.4,765.5M302.5,523.6L189.3,638.3M305.9,524.8L193.0,639.7M309.4,525.9L196.6,641.1M312.8,527.0L200.3,642.4M316.3,528.2L204.0,643.8M319.8,529.3L207.7,645.2M323.2,530.5L211.4,646.6M326.7,531.6L215.1,648.0M330.2,532.8L218.8,649.4M337.2,535.1L226.3,652.2M340.7,536.2L230.0,653.6M344.2,537.4L233.8,655.0M347.7,538.6L237.6,656.5M351.3,539.7L241.3,657.9M354.8,540.9L245.1,659.3M358.3,542.1L248.9,660.7M361.9,543.2L252.7,662.2M365.5,544.4L256.5,663.6M372.6,546.8L264.1,666.5M376.2,547.9L268.0,667.9M379.8,549.1L271.8,669.3M383.4,550.3L275.7,670.8M387.0,551.5L279.5,672.2M390.6,552.7L283.4,673.7M496.2,457.7L408.7,558.7M499.6,458.7L412.4,559.9M503.0,459.7L416.1,561.1M506.4,460.7L419.7,562.3M509.9,461.7L423.4,563.5M513.3,462.8L427.1,564.8M516.8,463.8L430.8,566.0M520.2,464.8L434.5,567.2M523.7,465.8L438.2,568.4M530.7,467.8L445.6,570.9M534.1,468.9L449.4,572.1M537.6,469.9L453.1,573.3M541.1,470.9L456.9,574.6M544.6,472.0L460.6,575.8M548.1,473.0L464.4,577.1M551.7,474.0L468.2,578.3M555.2,475.1L471.9,579.6M558.7,476.1L475.7,580.8M565.8,478.2L483.3,583.3M569.4,479.2L487.1,584.6M572.9,480.3L491.0,585.8M576.5,481.3L494.8,587.1M580.1,482.4L498.6,588.4M583.6,483.4L502.5,589.6M587.2,484.5L506.3,590.9M668.3,399.1L601.7,488.7M671.7,400.0L605.3,489.8M675.1,400.9L608.9,490.8M678.5,401.8L612.6,491.9M681.9,402.7L616.2,493.0M685.3,403.6L619.8,494.1M688.7,404.5L623.5,495.1M692.2,405.4L627.2,496.2M695.6,406.3L630.8,497.3M702.5,408.1L638.2,499.5M705.9,409.1L641.9,500.5M709.4,410.0L645.6,501.6M712.8,410.9L649.3,502.7M716.3,411.8L653.0,503.8M719.7,412.7L656.8,504.9M723.2,413.6L660.5,506.0M726.7,414.6L664.2,507.1M730.2,415.5L668.0,508.2M737.2,417.3L675.5,510.4M740.7,418.3L679.3,511.5M744.2,419.2L683.1,512.6M747.7,420.1L686.8,513.8M751.3,421.1L690.6,514.9M754.8,422.0L694.4,516.0M758.4,422.9L698.2,517.1M761.9,423.9L702.1,518.2M765.5,424.8L705.9,519.3M889.5,750.6L1236.8,868.1M888.3,753.7L1236.4,871.8M887.1,756.9L1235.9,875.5M885.8,760.0L1235.5,879.3M884.6,763.2L1235.1,883.0M883.4,766.4L1234.6,886.8M882.1,769.6L1234.2,890.6M879.6,776.1L1233.2,898.3M878.4,779.4L1232.8,902.2M575.8,677.9L877.1,782.6M573.9,680.7L875.8,785.9M572.1,683.5L874.6,789.2M570.2,686.4L873.3,792.5M568.4,689.2L872.0,795.9M566.5,692.1L870.7,799.2M564.6,695.0L869.4,802.6M560.8,700.7L866.8,809.4M558.9,703.7L865.5,812.8M557.0,706.6L864.1,816.3M555.1,709.5L862.8,819.7M553.2,712.5L861.4,823.2M551.2,715.4L860.1,826.7M549.3,718.4L858.7,830.2M547.3,721.4L857.4,833.7M545.3,724.4L856.0,837.2M275.1,633.2L541.4,730.5M272.7,635.8L539.4,733.5M270.3,638.5L537.4,736.6M267.9,641.1L535.4,739.6M265.4,643.8L533.4,742.7M263.0,646.4L531.3,745.8M260.5,649.1L529.3,749.0M258.0,651.8L527.2,752.1M255.5,654.5L525.2,755.2M250.5,659.9L521.0,761.6M248.0,662.6L519.0,764.8M245.5,665.4L516.9,768.0M243.0,668.1L514.7,771.2M240.4,670.9L512.6,774.4M3.5,584.3L237.8,673.7M237.8,673.7L510.5,777.7M0.6,586.7L235.3,676.5M-2.3,589.1L232.7,679.3M-5.2,591.6L230.1,682.1M-11.0,596.5L224.9,687.8M-13.9,598.9L222.2,690.6M-16.9,601.4L219.6,693.5M-19.8,603.9L216.9,696.4M-22.8,606.4L214.3,699.3M-25.8,608.9L211.6,702.2M-28.7,611.4L208.9,705.1M-31.8,613.9L206.2,708.0M-34.8,616.5L203.5,711.0M-40.8,621.6L198.0,716.9M-43.9,624.1L195.3,719.9"/>
<path stroke-width="0.65" d="M163.9,628.7L23.2,767.2M167.5,630.1L27.1,768.9M171.1,631.4L30.9,770.6M174.7,632.8L34.8,772.3M178.3,634.2L38.7,773.9M182.0,635.5L42.5,775.6M189.3,638.3L50.3,779.1M193.0,639.7L54.2,780.8M196.6,641.1L58.1,782.5M200.3,642.4L62.1,784.2M204.0,643.8L66.0,785.9M207.7,645.2L70.0,787.6M211.4,646.6L73.9,789.4M215.1,648.0L77.9,791.1M218.8,649.4L81.9,792.9M226.3,652.2L89.8,796.3M230.0,653.6L93.8,798.1M233.8,655.0L97.9,799.9M237.6,656.5L101.9,801.6M241.3,657.9L105.9,803.4M245.1,659.3L110.0,805.2M248.9,660.7L114.0,806.9M394.2,553.9L287.3,675.2M397.8,555.1L291.1,676.6M401.5,556.3L295.0,678.1M408.7,558.7L302.8,681.0M412.4,559.9L306.8,682.5M416.1,561.1L310.7,684.0M419.7,562.3L314.6,685.5M423.4,563.5L318.6,686.9M427.1,564.8L322.5,688.4M430.8,566.0L326.5,689.9M434.5,567.2L330.5,691.4M438.2,568.4L334.5,692.9M445.6,570.9L342.5,695.9M449.4,572.1L346.5,697.4M453.1,573.3L350.5,699.0M456.9,574.6L354.5,700.5M460.6,575.8L358.6,702.0M464.4,577.1L362.6,703.5M468.2,578.3L366.7,705.0M471.9,579.6L370.8,706.6M475.7,580.8L374.8,708.1M590.8,485.5L510.2,592.2M594.4,486.6L514.1,593.5M601.7,488.7L521.8,596.0M605.3,489.8L525.7,597.3M608.9,490.8L529.6,598.6M612.6,491.9L533.5,599.9M616.2,493.0L537.5,601.2M619.8,494.1L541.4,602.5M623.5,495.1L545.3,603.8M627.2,496.2L549.3,605.1M630.8,497.3L553.2,606.4M638.2,499.5L561.2,609.0M641.9,500.5L565.2,610.3M645.6,501.6L569.1,611.6M649.3,502.7L573.1,612.9M653.0,503.8L577.1,614.3M656.8,504.9L581.2,615.6M660.5,506.0L585.2,616.9M664.2,507.1L589.2,618.3M668.0,508.2L593.3,619.6M675.5,510.4L601.4,622.3M679.3,511.5L605.4,623.6M683.1,512.6L609.5,625.0M686.8,513.8L613.6,626.3M772.6,426.7L713.5,521.6M776.2,427.7L717.4,522.7M779.7,428.6L721.2,523.9M783.3,429.6L725.1,525.0M786.9,430.5L729.0,526.1M790.5,431.5L732.9,527.3M794.1,432.4L736.7,528.4M797.7,433.4L740.6,529.6M801.4,434.3L744.5,530.7M808.6,436.3L752.4,533.0M812.3,437.2L756.3,534.2M815.9,438.2L760.2,535.3M819.6,439.2L764.2,536.5M823.2,440.1L768.1,537.6M826.9,441.1L772.1,538.8M830.6,442.1L776.0,540.0M834.3,443.1L780.0,541.1M838.0,444.0L784.0,542.3M845.4,446.0L792.0,544.6M849.1,447.0L796.0,545.8M852.8,448.0L800.0,547.0M856.5,448.9L804.0,548.2M860.2,449.9L808.0,549.4M864.0,450.9L812.1,550.6M867.7,451.9L816.1,551.8M877.1,782.6L1232.3,906.1M875.8,785.9L1231.9,910.0M874.6,789.2L1231.4,913.9M873.3,792.5L1230.9,917.8M872.0,795.9L1230.5,921.8M870.7,799.2L1230.0,925.8M869.4,802.6L1229.5,929.8M866.8,809.4L1228.6,937.9M865.5,812.8L1228.1,942.0M864.1,816.3L1227.6,946.0M862.8,819.7L1227.1,950.2M861.4,823.2L1226.6,954.3M860.1,826.7L1226.1,958.5M858.7,830.2L1225.6,962.6M857.4,833.7L1225.1,966.9M541.4,730.5L853.3,844.4M539.4,733.5L851.9,848.0M537.4,736.6L850.5,851.6M535.4,739.6L849.1,855.2M533.4,742.7L847.7,858.8M531.3,745.8L846.3,862.5M529.3,749.0L844.8,866.2M527.2,752.1L843.4,869.9M525.2,755.2L842.0,873.6M521.0,761.6L839.1,881.1M519.0,764.8L837.6,884.9M516.9,768.0L836.1,888.7M514.7,771.2L834.7,892.5M512.6,774.4L833.2,896.3M235.3,676.5L508.4,780.9M232.7,679.3L506.2,784.2M230.1,682.1L504.1,787.5M224.9,687.8L499.7,794.2M222.2,690.6L497.5,797.5M219.6,693.5L495.3,800.9M216.9,696.4L493.1,804.3M214.3,699.3L490.9,807.7M211.6,702.2L488.7,811.1M208.9,705.1L486.4,814.5M206.2,708.0L484.2,817.9M203.5,711.0L481.9,821.4M198.0,716.9L477.4,828.4M195.3,719.9L475.1,831.9M-47.0,626.7L192.5,722.9M-50.0,629.3L189.7,725.9M-53.1,631.9L186.9,728.9M-56.2,634.5L184.1,731.9M-59.4,637.1L181.3,735.0M-62.5,639.8L178.5,738.1M-65.6,642.4L175.7,741.2M-72.0,647.7L169.9,747.4M-75.2,650.4L167.1,750.5M-78.4,653.1L164.2,753.6M-81.6,655.8L161.3,756.8M-84.8,658.5L158.3,759.9M-88.0,661.2L155.4,763.1M-91.3,664.0L152.4,766.3M-94.6,666.7L149.5,769.5"/>
<path stroke-width="0.7" d="M0.4,757.2L-177.5,928.2M4.2,758.9L-173.4,930.3M11.8,762.2L-165.4,934.5M15.6,763.9L-161.3,936.6M19.4,765.5L-157.3,938.7M23.2,767.2L-153.2,940.9M27.1,768.9L-149.1,943.0M30.9,770.6L-145.0,945.2M34.8,772.3L-140.9,947.3M38.7,773.9L-136.8,949.5M42.5,775.6L-132.6,951.6M50.3,779.1L-124.3,956.0M54.2,780.8L-120.2,958.1M58.1,782.5L-116.0,960.3M252.7,662.2L118.1,808.7M256.5,663.6L122.2,810.5M264.1,666.5L130.4,814.1M268.0,667.9L134.5,815.9M271.8,669.3L138.6,817.7M275.7,670.8L142.7,819.5M279.5,672.2L146.9,821.3M283.4,673.7L151.0,823.1M287.3,675.2L155.2,824.9M291.1,676.6L159.3,826.8M295.0,678.1L163.5,828.6M302.8,681.0L171.9,832.3M306.8,682.5L176.1,834.1M310.7,684.0L180.4,836.0M314.6,685.5L184.6,837.8M318.6,686.9L188.9,839.7M322.5,688.4L193.1,841.5M326.5,689.9L197.4,843.4M330.5,691.4L201.7,845.3M334.5,692.9L206.0,847.2M483.3,583.3L383.0,711.2M487.1,584.6L387.1,712.7M491.0,585.8L391.2,714.3M494.8,587.1L395.4,715.8M498.6,588.4L399.5,717.4M502.5,589.6L403.7,719.0M506.3,590.9L407.8,720.5M510.2,592.2L412.0,722.1M514.1,593.5L416.2,723.7M521.8,596.0L424.5,726.8M525.7,597.3L428.7,728.4M529.6,598.6L433.0,730.0M533.5,599.9L437.2,731.6M537.5,601.2L441.4,733.2M541.4,602.5L445.7,734.8M545.3,603.8L449.9,736.4M549.3,605.1L454.2,738.0M553.2,606.4L458.5,739.6M561.2,609.0L467.1,742.8M565.2,610.3L471.4,744.4M569.1,611.6L475.7,746.1M573.1,612.9L480.0,747.7M690.6,514.9L617.7,627.7M694.4,516.0L621.8,629.0M698.2,517.1L625.9,630.4M702.1,518.2L630.0,631.7M705.9,519.3L634.2,633.1M713.5,521.6L642.5,635.8M717.4,522.7L646.6,637.2M721.2,523.9L650.8,638.6M725.1,525.0L655.0,640.0M729.0,526.1L659.2,641.3M732.9,527.3L663.4,642.7M736.7,528.4L667.6,644.1M740.6,529.6L671.8,645.5M744.5,530.7L676.0,646.9M752.4,533.0L684.5,649.7M756.3,534.2L688.7,651.1M760.2,535.3L693.0,652.5M764.2,536.5L697.3,653.9M768.1,537.6L701.6,655.3M772.1,538.8L705.8,656.7M776.0,540.0L710.1,658.2M780.0,541.1L714.5,659.6M784.0,542.3L718.8,661.0M871.5,452.9L820.2,552.9M875.2,453.9L824.2,554.1M882.8,455.9L832.4,556.5M886.6,456.9L836.5,557.7M890.3,457.9L840.6,558.9M894.1,458.9L844.7,560.1M897.9,459.9L848.8,561.4M901.7,460.9L852.9,562.6M905.6,461.9L857.1,563.8M909.4,463.0L861.2,565.0M913.2,464.0L865.4,566.2M920.9,466.0L873.7,568.7M924.8,467.0L877.9,569.9M928.6,468.1L882.0,571.1M932.5,469.1L886.2,572.4M856.0,837.2L1224.6,971.1M853.3,844.4L1223.6,979.6M510.5,777.7L831.7,900.2M508.4,780.9L830.2,904.1M506.2,784.2L828.7,908.0M504.1,787.5L827.2,911.9M499.7,794.2L824.1,919.8M497.5,797.5L822.6,923.7M495.3,800.9L821.1,927.7M493.1,804.3L819.5,931.8M490.9,807.7L817.9,935.8M488.7,811.1L816.4,939.9M486.4,814.5L814.8,943.9M484.2,817.9L813.2,948.1M481.9,821.4L811.6,952.2M192.5,722.9L472.7,835.4M189.7,725.9L470.4,839.0M186.9,728.9L468.1,842.5M184.1,731.9L465.7,846.1M181.3,735.0L463.4,849.7M178.5,738.1L461.0,853.3M175.7,741.2L458.6,857.0M169.9,747.4L453.9,864.3M167.1,750.5L451.4,868.0M164.2,753.6L449.0,871.7M161.3,756.8L446.6,875.4M158.3,759.9L444.1,879.2M155.4,763.1L441.7,882.9M-97.8,669.5L146.5,772.8M-104.5,675.0L140.5,779.3M-107.8,677.8L137.5,782.5M-111.1,680.7L134.5,785.8M-114.5,683.5L131.4,789.1M-117.9,686.3L128.4,792.5M-121.2,689.2L125.3,795.8M-124.6,692.0L122.2,799.2M-128.1,694.9L119.1,802.5M-131.5,697.8L116.0,805.9M-138.4,703.6L109.7,812.7M-141.9,706.5L106.5,816.2"/>
<path stroke-width="0.75" d="M62.1,784.2L-111.8,962.5M66.0,785.9L-107.6,964.7M70.0,787.6L-103.4,966.9M73.9,789.4L-99.2,969.1M77.9,791.1L-94.9,971.3M81.9,792.9L-90.7,973.5M89.8,796.3L-82.2,978.0M93.8,798.1L-77.9,980.2M97.9,799.9L-73.6,982.5M101.9,801.6L-69.3,984.7M105.9,803.4L-64.9,987.0M110.0,805.2L-60.6,989.3M114.0,806.9L-56.3,991.5M118.1,808.7L-51.9,993.8M122.2,810.5L-47.5,996.1M130.4,814.1L-38.8,1000.7M134.5,815.9L-34.3,1003.0M138.6,817.7L-29.9,1005.3M342.5,695.9L214.6,850.9M346.5,697.4L218.9,852.8M350.5,699.0L223.2,854.7M354.5,700.5L227.6,856.6M358.6,702.0L232.0,858.5M362.6,703.5L236.3,860.4M366.7,705.0L240.7,862.4M370.8,706.6L245.1,864.3M374.8,708.1L249.5,866.2M383.0,711.2L258.4,870.1M387.1,712.7L262.8,872.0M391.2,714.3L267.3,874.0M395.4,715.8L271.7,875.9M399.5,717.4L276.2,877.9M403.7,719.0L280.7,879.9M407.8,720.5L285.2,881.8M412.0,722.1L289.7,883.8M416.2,723.7L294.2,885.8M577.1,614.3L484.3,749.3M581.2,615.6L488.7,751.0M585.2,616.9L493.1,752.6M589.2,618.3L497.4,754.2M593.3,619.6L501.8,755.9M601.4,622.3L510.6,759.2M605.4,623.6L515.0,760.9M609.5,625.0L519.5,762.5M613.6,626.3L523.9,764.2M617.7,627.7L528.3,765.9M621.8,629.0L532.8,767.5M625.9,630.4L537.3,769.2M630.0,631.7L541.7,770.9M634.2,633.1L546.2,772.6M642.5,635.8L555.2,776.0M646.6,637.2L559.8,777.7M650.8,638.6L564.3,779.4M655.0,640.0L568.9,781.1M659.2,641.3L573.4,782.8M663.4,642.7L578.0,784.5M792.0,544.6L727.5,663.9M796.0,545.8L731.8,665.3M800.0,547.0L736.2,666.8M804.0,548.2L740.5,668.2M808.0,549.4L744.9,669.6M812.1,550.6L749.3,671.1M816.1,551.8L753.7,672.5M820.2,552.9L758.1,674.0M824.2,554.1L762.5,675.5M832.4,556.5L771.4,678.4M836.5,557.7L775.9,679.9M840.6,558.9L780.3,681.3M844.7,560.1L784.8,682.8M848.8,561.4L789.3,684.3M852.9,562.6L793.8,685.8M857.1,563.8L798.3,687.3M861.2,565.0L802.8,688.7M865.4,566.2L807.3,690.2M873.7,568.7L816.4,693.2M877.9,569.9L820.9,694.7M882.0,571.1L825.5,696.2M477.4,828.4L808.4,960.5M475.1,831.9L806.8,964.7M472.7,835.4L805.2,968.9M470.4,839.0L803.5,973.2M468.1,842.5L801.9,977.4M152.4,766.3L439.2,886.7M149.5,769.5L436.7,890.5M146.5,772.8L434.2,894.4M140.5,779.3L429.2,902.1M137.5,782.5L426.6,906.0M134.5,785.8L424.1,909.9M131.4,789.1L421.5,913.8M128.4,792.5L418.9,917.7M125.3,795.8L416.3,921.7M122.2,799.2L413.7,925.7M119.1,802.5L411.1,929.7M-145.4,709.5L103.3,819.6M-148.9,712.4L100.1,823.1M-152.4,715.4L96.9,826.6M-156.0,718.3L93.7,830.1M-159.5,721.3L90.4,833.6M-163.1,724.3L87.2,837.1M-166.7,727.4L83.9,840.7M-173.9,733.4L77.3,847.9M-177.6,736.5L74.0,851.5M-181.2,739.6L70.6,855.1M-184.9,742.7L67.3,858.8"/>
<path stroke-width="0.8" d="M142.7,819.5L-25.5,1007.6M146.9,821.3L-21.0,1010.0M151.0,823.1L-16.6,1012.3M155.2,824.9L-12.1,1014.6M159.3,826.8L-7.6,1017.0M163.5,828.6L-3.1,1019.3M171.9,832.3L5.9,1024.0M176.1,834.1L10.5,1026.4M180.4,836.0L15.0,1028.8M184.6,837.8L19.6,1031.2M188.9,839.7L24.2,1033.6M193.1,841.5L28.7,1036.0M197.4,843.4L33.4,1038.4M424.5,726.8L303.3,889.8M428.7,728.4L307.9,891.8M433.0,730.0L312.4,893.8M437.2,731.6L317.0,895.8M441.4,733.2L321.6,897.8M445.7,734.8L326.2,899.8M449.9,736.4L330.9,901.8M454.2,738.0L335.5,903.8M458.5,739.6L340.1,905.9M467.1,742.8L349.5,910.0M471.4,744.4L354.2,912.0M475.7,746.1L358.9,914.1M480.0,747.7L363.6,916.1M484.3,749.3L368.3,918.2M488.7,751.0L373.0,920.3M493.1,752.6L377.8,922.3M497.4,754.2L382.6,924.4M501.8,755.9L387.3,926.5M667.6,644.1L582.6,786.3M671.8,645.5L587.2,788.0M676.0,646.9L591.8,789.7M684.5,649.7L601.0,793.2M688.7,651.1L605.6,795.0M693.0,652.5L610.3,796.7M697.3,653.9L615.0,798.5M701.6,655.3L619.6,800.2M705.8,656.7L624.3,802.0M710.1,658.2L629.0,803.7M714.5,659.6L633.7,805.5M718.8,661.0L638.4,807.3M727.5,663.9L647.9,810.9M731.8,665.3L652.7,812.7M736.2,666.8L657.4,814.4M740.5,668.2L662.2,816.2M744.9,669.6L667.0,818.0M749.3,671.1L671.8,819.9M753.7,672.5L676.6,821.7M886.2,572.4L830.1,697.8M890.4,573.6L834.7,699.3M894.7,574.8L839.3,700.8M898.9,576.1L843.9,702.3M903.1,577.3L848.5,703.8M907.3,578.6L853.1,705.4M915.8,581.1L862.4,708.4M920.1,582.3L867.1,710.0M924.4,583.6L871.8,711.5M928.7,584.8L876.4,713.1M933.0,586.1L881.1,714.6M937.3,587.4L885.9,716.2M116.0,805.9L408.4,933.7M109.7,812.7L403.1,941.9M106.5,816.2L400.5,946.0M103.3,819.6L397.8,950.1M100.1,823.1L395.1,954.2M96.9,826.6L392.3,958.4M93.7,830.1L389.6,962.5M90.4,833.6L386.9,966.8M87.2,837.1L384.1,971.0M83.9,840.7L381.3,975.2M-188.6,745.8L63.9,862.4M-192.3,748.9L60.5,866.1M-196.0,752.0L57.1,869.8M-199.7,755.2L53.6,873.5M-203.5,758.3L50.2,877.3M-211.1,764.7L43.3,884.8M-214.9,767.9L39.8,888.6M-218.7,771.1L36.2,892.4M-222.6,774.4L32.7,896.2M-226.4,777.6L29.2,900.1M-230.3,780.9L25.6,904.0"/>
<path stroke-width="0.85" d="M510.6,759.2L396.9,930.7M515.0,760.9L401.7,932.8M519.5,762.5L406.6,934.9M523.9,764.2L411.4,937.1M528.3,765.9L416.3,939.2M532.8,767.5L421.1,941.3M537.3,769.2L426.0,943.5M541.7,770.9L430.9,945.6M546.2,772.6L435.8,947.7M555.2,776.0L445.7,952.1M559.8,777.7L450.6,954.2M564.3,779.4L455.6,956.4M568.9,781.1L460.6,958.6M573.4,782.8L465.6,960.8M578.0,784.5L470.6,963.0M582.6,786.3L475.6,965.2M587.2,788.0L480.6,967.4M758.1,674.0L681.5,823.5M762.5,675.5L686.3,825.3M771.4,678.4L696.0,829.0M775.9,679.9L700.9,830.8M780.3,681.3L705.8,832.6M784.8,682.8L710.7,834.5M789.3,684.3L715.6,836.3M793.8,685.8L720.6,838.2M798.3,687.3L725.5,840.1M802.8,688.7L730.5,841.9M807.3,690.2L735.4,843.8M816.4,693.2L745.4,847.5M820.9,694.7L750.4,849.4M825.5,696.2L755.4,851.3M830.1,697.8L760.5,853.2M834.7,699.3L765.5,855.1M839.3,700.8L770.6,857.0M843.9,702.3L775.6,858.9M848.5,703.8L780.7,860.8M-234.2,784.2L22.0,907.9M-238.2,787.5L18.4,911.8M-242.1,790.8L14.8,915.7M-250.0,797.4L7.4,923.7M-254.0,800.8L3.8,927.6M-258.1,804.2L0.1,931.7"/>
<path stroke-width="0.9" d="M591.8,789.7L485.7,969.6M601.0,793.2L495.8,974.0M605.6,795.0L500.9,976.2M610.3,796.7L506.0,978.5M615.0,798.5L511.2,980.7M619.6,800.2L516.3,983.0M624.3,802.0L521.4,985.2M629.0,803.7L526.6,987.5M633.7,805.5L531.8,989.7M638.4,807.3L537.0,992.0M647.9,810.9L547.4,996.6M652.7,812.7L552.7,998.9M657.4,814.4L557.9,1001.2M662.2,816.2L563.2,1003.5M667.0,818.0L568.5,1005.8M671.8,819.9L573.8,1008.1M676.6,821.7L579.1,1010.4M681.5,823.5L584.4,1012.8M686.3,825.3L589.8,1015.1M696.0,829.0L600.5,1019.8M700.9,830.8L605.9,1022.2M705.8,832.6L611.3,1024.5M710.7,834.5L616.7,1026.9M715.6,836.3L622.2,1029.3M720.6,838.2L627.6,1031.7M725.5,840.1L633.1,1034.1M730.5,841.9L638.6,1036.5M735.4,843.8L644.1,1038.9M853.1,705.4L785.8,862.8M862.4,708.4L796.1,866.6M867.1,710.0L801.2,868.5M871.8,711.5L806.4,870.5M876.4,713.1L811.5,872.4M881.1,714.6L816.7,874.4M885.9,716.2L821.9,876.3M890.6,717.7L827.1,878.3M895.3,719.3L832.4,880.3M900.0,720.8L837.6,882.2M909.6,724.0L848.1,886.2M914.3,725.6L853.4,888.2M919.1,727.1L858.7,890.2M923.9,728.7L864.0,892.2M928.7,730.3L869.3,894.2M933.5,731.9L874.6,896.2M938.4,733.5L880.0,898.2M943.2,735.1L885.4,900.2"/>
</g>
<polygon points="154.8,263.1 1273.4,559.4 1271.6,574.6 159.2,275.9 -518.8,749.8 -539.0,739.2" fill="#b0b0b0" fill-opacity="0.6"/>
<g stroke="#828487" stroke-width="1.35"><line x1="167.04" y1="266.30" x2="-524.03" y2="747.02" /><line x1="192.66" y1="273.08" x2="-492.48" y2="763.51" /><line x1="218.67" y1="279.98" x2="-460.14" y2="780.41" /><line x1="245.11" y1="286.98" x2="-427.00" y2="797.74" /><line x1="271.97" y1="294.09" x2="-393.01" y2="815.51" /><line x1="299.26" y1="301.32" x2="-358.14" y2="833.73" /><line x1="327.00" y1="308.67" x2="-322.37" y2="852.43" /><line x1="355.19" y1="316.14" x2="-285.64" y2="871.63" /><line x1="383.85" y1="323.73" x2="-247.94" y2="891.34" /><line x1="413.00" y1="331.46" x2="-209.20" y2="911.59" /><line x1="442.63" y1="339.31" x2="-169.41" y2="932.39" /><line x1="472.77" y1="347.29" x2="-128.50" y2="953.78" /><line x1="503.42" y1="355.41" x2="-86.43" y2="975.77" /><line x1="534.61" y1="363.67" x2="-43.15" y2="998.40" /><line x1="566.34" y1="372.08" x2="1.39" y2="1021.68" /><line x1="598.63" y1="380.63" x2="47.25" y2="1045.65" /><line x1="631.50" y1="389.34" x2="94.48" y2="1070.34" /><line x1="664.95" y1="398.20" x2="143.16" y2="1095.79" /><line x1="699.01" y1="407.23" x2="193.34" y2="1122.02" /><line x1="733.69" y1="416.41" x2="245.10" y2="1149.08" /><line x1="769.02" y1="425.77" x2="298.52" y2="1177.00" /><line x1="804.99" y1="435.30" x2="353.66" y2="1205.83" /><line x1="841.65" y1="445.01" x2="410.63" y2="1235.61" /><line x1="879.00" y1="454.91" x2="469.51" y2="1266.39" /><line x1="917.06" y1="464.99" x2="530.40" y2="1298.22" /><line x1="955.86" y1="475.27" x2="593.40" y2="1331.15" /><line x1="995.42" y1="485.75" x2="658.63" y2="1365.25" /><line x1="1035.75" y1="496.44" x2="726.21" y2="1400.58" /><line x1="1076.89" y1="507.33" x2="796.26" y2="1437.20" /><line x1="1118.86" y1="518.45" x2="868.93" y2="1475.18" /><line x1="1161.68" y1="529.80" x2="944.35" y2="1514.61" /><line x1="1205.37" y1="541.37" x2="1022.71" y2="1555.57" /><line x1="1249.97" y1="553.19" x2="1104.16" y2="1598.15" /><line x1="149.95" y1="266.41" x2="1272.70" y2="565.45" /><line x1="130.90" y1="279.48" x2="1269.88" y2="589.25" /><line x1="111.26" y1="292.96" x2="1266.94" y2="614.04" /><line x1="91.02" y1="306.85" x2="1263.88" y2="639.88" /><line x1="70.13" y1="321.19" x2="1260.68" y2="666.86" /><line x1="48.57" y1="335.98" x2="1257.34" y2="695.03" /><line x1="26.31" y1="351.26" x2="1253.85" y2="724.48" /><line x1="3.30" y1="367.05" x2="1250.19" y2="755.31" /><line x1="-20.48" y1="383.37" x2="1246.37" y2="787.61" /><line x1="-45.08" y1="400.25" x2="1242.35" y2="821.48" /><line x1="-70.53" y1="417.72" x2="1238.13" y2="857.05" /><line x1="-96.90" y1="435.81" x2="1233.70" y2="894.46" /><line x1="-124.22" y1="454.56" x2="1229.03" y2="933.83" /><line x1="-152.55" y1="474.00" x2="1224.11" y2="975.33" /><line x1="-181.94" y1="494.18" x2="1218.92" y2="1019.15" /><line x1="-212.46" y1="515.12" x2="1213.42" y2="1065.47" /><line x1="-244.18" y1="536.89" x2="1207.61" y2="1114.53" /><line x1="-277.16" y1="559.52" x2="1201.44" y2="1166.56" /><line x1="-311.47" y1="583.07" x2="1194.88" y2="1221.86" /><line x1="-347.22" y1="607.60" x2="1187.90" y2="1280.73" /><line x1="-384.47" y1="633.17" x2="1180.46" y2="1343.53" /><line x1="-423.35" y1="659.84" x2="1172.50" y2="1410.68" /><line x1="-463.94" y1="687.70" x2="1163.97" y2="1482.63" /><line x1="-506.37" y1="716.82" x2="1154.80" y2="1559.93" /></g>
</g>
<g stroke="#17a5e1" stroke-width="1.05" fill="none">
<line x1="154.83" y1="263.06" x2="1273.42" y2="559.40" />
<line x1="154.83" y1="263.06" x2="-538.98" y2="739.20" />
<line x1="154.83" y1="263.06" x2="12.42" y2="-974.91" />
</g>
<g transform="matrix(1,0.234,0,1,498,275.9)" fill="#565c60" stroke="#565c60" stroke-width="3" stroke-linejoin="round" stroke-linecap="round" font-family="Liberation Sans, sans-serif" font-size="65">
<text x="5.9 55.7 78.5 102.5 118.1 176 214 249 288" y="0">Ultimaker</text>
<path d="M2,-41.5 C7,-42.5 11,-42 13.5,-40.5" fill="none" stroke-width="8.6"/>
</g>
<g>
<path d="M241,161 L222,153.5 C214,151.5 207.5,157 208.5,166 C209.5,174 214,178 220,181 L246,195 Z" fill="#c3c3c3"/>
<ellipse cx="225.1" cy="169.2" rx="6" ry="8.4" transform="rotate(-18 225.1 169.2)" fill="#e6e6e6"/>
</g>
<path d="M239.2,158 A121.5,48.6 0 0 1 482,158 L479.3,344 L254.7,344 Z" fill="#adadad"/>
<ellipse cx="360.6" cy="157.8" rx="121.4" ry="48.5" fill="#c1c1c1"/>
<clipPath id="topel"><ellipse cx="360.6" cy="157.8" rx="121.4" ry="48.5"/></clipPath>
<polygon clip-path="url(#topel)" points="230.0,132.9 490.0,189.2 490.0,230.0 230.0,230.0" fill="#bababa"/>
<polygon points="240.5,156 258.5,159.5 262,210 244.5,200.5" fill="#a2a2a2"/>
<defs><pattern id="cy" width="2.2" height="2.2" patternUnits="userSpaceOnUse"><rect width="2.2" height="2.2" fill="#00ffff"/><rect x="0.7" y="0.7" width="0.85" height="0.85" fill="#005a62"/></pattern>
<filter id="bl" x="-20%" y="-20%" width="140%" height="140%"><feGaussianBlur stdDeviation="4"/></filter>
<filter id="bl2" x="-20%" y="-20%" width="140%" height="140%"><feGaussianBlur stdDeviation="2.2"/></filter>
</defs>
<path d="M196,628 C186,640 180,658 184,678 C188,700 210,713 241,722 C228,738 221,760 227,782 C236,812 270,834 300,838 L330,842 L372,840 C398,828 420,805 430,778 C445,786 470,792 495,790 C535,786 570,762 578,735 C584,712 575,688 548,666 L400,640 Z" fill="url(#cy)"/>
<clipPath id="bc"><path d="M253.6,344.0 L252.1,364.5 L245.2,416.2 L234.8,474.8 L222.8,536.9 L214.1,592.0 L211.6,606.0 L203.0,604.5 L193.0,607.0 L185.5,614.0 L184.5,622.0 L189.0,630.0 L198.0,634.5 L207.0,636.5 L212.0,636.5 L213.0,652.0 L216.4,669.7 L222.6,683.6 L231.9,686.2 L227.0,690.5 L225.5,697.0 L228.5,705.0 L237.0,711.0 L247.0,713.5 L255.1,711.0 L256.5,735.0 L259.7,765.6 L264.0,782.0 L272.1,793.5 L285.0,803.0 L300.0,809.0 L316.0,811.5 L330.9,811.4 L347.0,808.0 L361.8,802.8 L377.0,796.5 L389.3,787.0 L395.0,775.0 L397.8,765.6 L400.0,739.9 L398.9,709.9 L400.0,684.2 L405.3,660.7 L408.3,658.0 L410.7,660.0 L410.3,684.2 L409.6,709.9 L412.8,727.1 L423.5,744.2 L440.7,754.9 L457.4,760.0 L472.0,762.6 L488.3,762.6 L504.0,759.5 L519.2,753.3 L531.0,745.5 L540.9,734.7 L544.0,727.0 L556.0,730.0 L568.0,733.0 L578.0,735.5 L585.0,733.0 L588.5,726.0 L586.5,717.0 L579.0,709.0 L565.0,699.5 L550.0,690.0 L544.5,686.5 L548.6,680.0 L549.0,668.0 L547.6,656.0 L538.8,611.9 L523.3,541.5 L505.7,462.2 L488.1,382.9 L479.3,344.0 A112.9,56.6 0 0 0 253.6,344 Z"/></clipPath>
<path d="M253.6,344.0 L252.1,364.5 L245.2,416.2 L234.8,474.8 L222.8,536.9 L214.1,592.0 L211.6,606.0 L203.0,604.5 L193.0,607.0 L185.5,614.0 L184.5,622.0 L189.0,630.0 L198.0,634.5 L207.0,636.5 L212.0,636.5 L213.0,652.0 L216.4,669.7 L222.6,683.6 L231.9,686.2 L227.0,690.5 L225.5,697.0 L228.5,705.0 L237.0,711.0 L247.0,713.5 L255.1,711.0 L256.5,735.0 L259.7,765.6 L264.0,782.0 L272.1,793.5 L285.0,803.0 L300.0,809.0 L316.0,811.5 L330.9,811.4 L347.0,808.0 L361.8,802.8 L377.0,796.5 L389.3,787.0 L395.0,775.0 L397.8,765.6 L400.0,739.9 L398.9,709.9 L400.0,684.2 L405.3,660.7 L408.3,658.0 L410.7,660.0 L410.3,684.2 L409.6,709.9 L412.8,727.1 L423.5,744.2 L440.7,754.9 L457.4,760.0 L472.0,762.6 L488.3,762.6 L504.0,759.5 L519.2,753.3 L531.0,745.5 L540.9,734.7 L544.0,727.0 L556.0,730.0 L568.0,733.0 L578.0,735.5 L585.0,733.0 L588.5,726.0 L586.5,717.0 L579.0,709.0 L565.0,699.5 L550.0,690.0 L544.5,686.5 L548.6,680.0 L549.0,668.0 L547.6,656.0 L538.8,611.9 L523.3,541.5 L505.7,462.2 L488.1,382.9 L479.3,344.0 A112.9,56.6 0 0 0 253.6,344 Z" fill="#ff0000"/>
<g clip-path="url(#bc)"><g filter="url(#bl)" fill="none" stroke="#560000" stroke-linejoin="round">
<polyline points="253.6,344.0 252.1,364.5 245.2,416.2 234.8,474.8 222.8,536.9 214.1,592.0 211.6,606.0 212.0,640.0 213.0,652.0 216.4,669.7 222.6,683.6 231.9,686.2" stroke-width="11"/>
<polyline points="479.3,344.0 488.1,382.9 505.7,462.2 523.3,541.5 538.8,611.9 547.6,656.0 549.0,668.0 548.6,680.0" stroke-width="13"/>
<polyline points="247.0,565.0 250.0,600.0 253.0,650.0 255.1,711.0 256.5,735.0 259.7,765.6 264.0,782.0" stroke-width="8" stroke="#780000"/>
<polyline points="214.0,590.0 230.0,600.0 243.0,640.0 246.0,684.0" stroke-width="26" stroke="#c00000" opacity="0.4"/>
</g>
<pattern id="rl" width="2.3" height="2.3" patternUnits="userSpaceOnUse" patternTransform="rotate(-8)"><rect y="0" width="2.3" height="1" fill="#9a0000"/></pattern>
<filter id="bl3" x="-30%" y="-30%" width="160%" height="160%"><feGaussianBlur stdDeviation="9"/></filter>
<mask id="edgem" maskUnits="userSpaceOnUse" x="150" y="280" width="480" height="560"><g filter="url(#bl3)" fill="none" stroke="#fff" stroke-linejoin="round">
<polyline points="253.6,344.0 252.1,364.5 245.2,416.2 234.8,474.8 222.8,536.9 214.1,592.0 211.6,606.0 212.0,640.0 213.0,652.0 216.4,669.7 222.6,683.6 231.9,686.2" stroke-width="44"/>
<polyline points="479.3,344.0 488.1,382.9 505.7,462.2 523.3,541.5 538.8,611.9 547.6,656.0 549.0,668.0 548.6,680.0" stroke-width="52"/>
<polyline points="250.0,600.0 253.0,650.0 255.1,711.0 259.7,765.6" stroke-width="22"/>
<polyline points="413.5,634.0 410.3,684.2 409.6,709.9 412.8,727.1" stroke-width="20"/>
</g></mask>
<rect x="150" y="280" width="480" height="560" fill="url(#rl)" mask="url(#edgem)" opacity="0.55"/>
<g filter="url(#bl2)" fill="none" stroke="#7a0000">
<polyline points="413.5,634.0 411.0,650.0 409.5,662.0 410.3,684.2 409.6,709.9 412.8,727.1 423.5,744.2" stroke-width="5"/>
<polyline points="405.3,660.7 400.0,684.2 398.9,709.9 400.0,739.9 397.8,765.6 389.3,787.0" stroke-width="4" stroke="#a00000"/>
<polyline points="222.6,683.6 231.9,686.2 252.0,683.5" stroke-width="3"/>
<polyline points="212.0,604.0 212.0,640.0" stroke-width="3"/>
<polyline points="545.5,690.0 546.0,727.0" stroke-width="3.5"/>
</g></g>
<ellipse cx="196.3" cy="620.4" rx="6.3" ry="3.9" transform="rotate(38 196.3 620.4)" fill="#f0f0f0"/>
<ellipse cx="238.7" cy="698.8" rx="6.4" ry="3.9" transform="rotate(35 238.7 698.8)" fill="url(#cy)"/>
<ellipse cx="574.3" cy="722.6" rx="6.9" ry="4.3" transform="rotate(30 574.3 722.6)" fill="url(#cy)"/>
<rect x="196.6" y="621.4" width="2.6" height="1.8" fill="#3c0"/><rect x="195.2" y="622.4" width="1.6" height="1.4" fill="#dd0"/><rect x="239.6" y="700.4" width="2.4" height="1.8" fill="#3c0"/><rect x="238.4" y="701.6" width="1.5" height="1.3" fill="#dd0"/><rect x="573" y="724.2" width="2.6" height="1.8" fill="#3c0"/><rect x="575.4" y="723.4" width="1.5" height="1.3" fill="#dd0"/>
<ellipse cx="366.4" cy="344" rx="112.9" ry="56.6" fill="#ff0000"/>
<clipPath id="rimc"><ellipse cx="366.4" cy="344" rx="112.9" ry="56.6"/></clipPath>
<filter id="bl4" x="-10%" y="-20%" width="120%" height="140%"><feGaussianBlur stdDeviation="3.2"/></filter>
<linearGradient id="sideg" x1="0" x2="1" y1="0" y2="0"><stop offset="0" stop-color="#fff"/><stop offset="0.12" stop-color="#ddd"/><stop offset="0.34" stop-color="#000"/><stop offset="0.66" stop-color="#000"/><stop offset="0.88" stop-color="#ddd"/><stop offset="1" stop-color="#fff"/></linearGradient>
<mask id="sidem" maskUnits="userSpaceOnUse" x="250" y="280" width="236" height="130"><rect x="250" y="280" width="236" height="130" fill="url(#sideg)"/></mask>
<g clip-path="url(#rimc)"><g mask="url(#sidem)"><ellipse cx="366.4" cy="344" rx="112.9" ry="56.6" fill="none" stroke="#800000" stroke-width="22" filter="url(#bl4)" opacity="0.8"/></g></g>
<ellipse cx="366.4" cy="344" rx="111.9" ry="55.7" fill="none" stroke="#8a0000" stroke-width="1.2" stroke-dasharray="1.2 1.6"/>
<ellipse cx="366.4" cy="344" rx="112.7" ry="56.4" fill="none" stroke="#f2f200" stroke-width="1.5" stroke-dasharray="7 0.8"/>
<g font-family="Liberation Sans, Arial, sans-serif">
<text x="18" y="40.3" font-size="33.5" font-weight="normal" fill="#000" stroke="#000" stroke-width="1.25" stroke-linejoin="round" textLength="85.6" lengthAdjust="spacingAndGlyphs">cura</text>
<path d="M111.2,32.4 L116.9,32.4 L116.9,36.6 L113.8,39.8 L109.3,39.8 L109.3,34.6 Z" fill="#1d9ad6"/>
<text x="187.6" y="37.9" font-size="17" font-weight="bold" fill="#0a0a0a" text-anchor="start" textLength="62.3" lengthAdjust="spacing" >Prepare</text>
<rect x="158.9" y="54.9" width="119.8" height="3.1" fill="#3ab8f9"/>
<text x="308.6" y="37.9" font-size="16.6" font-weight="normal" fill="#8c8c8c" text-anchor="start" textLength="55.3" lengthAdjust="spacing" >Monitor</text>
<circle cx="379.1" cy="32.3" r="7.6" fill="#0c0c0c"/>
<text x="379.1" y="36.6" font-size="12" font-weight="bold" fill="#fff" text-anchor="middle">?</text>
<path d="M599.7,23.6 L607.3,27.4 L607.3,35.4 L599.7,39.3 L592.1,35.4 L592.1,27.4 Z" fill="#16191b"/>
<path d="M592.6,27.9 L599.7,31.6 L606.8,27.9 M599.7,31.6 L599.7,38.6" stroke="#f5f5f5" stroke-width="1.3" fill="none"/>
<path d="M620.3,29.1 h10.4 v10.4 h-10.4 Z" fill="#16191b" stroke="#16191b" stroke-width="1"/>
<path d="M620.3,29.1 l5.3,-4.8 h10.4 l-5.3,4.8 Z" fill="#fcfcfc" stroke="#16191b" stroke-width="1"/>
<path d="M630.6999999999999,29.1 l5.3,-4.8 v9.9 l-5.3,5.3 Z" fill="#fcfcfc" stroke="#16191b" stroke-width="1"/>
<path d="M648.2,29.1 h10.4 v10.4 h-10.4 Z" fill="#fcfcfc" stroke="#16191b" stroke-width="1"/>
<path d="M648.2,29.1 l5.3,-4.8 h10.4 l-5.3,4.8 Z" fill="#16191b" stroke="#16191b" stroke-width="1"/>
<path d="M658.6,29.1 l5.3,-4.8 v9.9 l-5.3,5.3 Z" fill="#fcfcfc" stroke="#16191b" stroke-width="1"/>
<path d="M681.5,29.1 h10.4 v10.4 h-10.4 Z M681.5,29.1 l-5.3,-4.8 h10.4 l5.3,4.8" fill="#fcfcfc" stroke="#16191b" stroke-width="1"/>
<path d="M681.5,29.1 l-5.3,-4.8 v9.9 l5.3,5.3 Z" fill="#16191b" stroke="#16191b" stroke-width="1"/>
<path d="M676.2,24.3 h10.4 l5.3,4.8 h-10.4 Z" fill="#fcfcfc" stroke="#16191b" stroke-width="1"/>
<path d="M704.4,29.1 h10.4 v10.4 h-10.4 Z" fill="#fcfcfc" stroke="#16191b" stroke-width="1"/>
<path d="M704.4,29.1 l5.3,-4.8 h10.4 l-5.3,4.8 Z" fill="#fcfcfc" stroke="#16191b" stroke-width="1"/>
<path d="M714.8,29.1 l5.3,-4.8 v9.9 l-5.3,5.3 Z" fill="#16191b" stroke="#16191b" stroke-width="1"/>
<rect x="738.4" y="19.9" width="129.3" height="24.6" fill="#fff" stroke="#5a5a5a" stroke-width="1"/>
<text x="745.5" y="36.6" font-size="13.6" font-weight="normal" fill="#1f2528" text-anchor="start" textLength="64.5" lengthAdjust="spacing" >Layer view</text>
<path d="M850.5999999999999,29.599999999999998 L854.8,34.199999999999996 L859.0,29.599999999999998" fill="none" stroke="#1c1c1c" stroke-width="1.75" stroke-linejoin="miter"/>
<rect x="673.3" y="58.5" width="194.3" height="310.5" fill="#fff" stroke="#bdbdbd" stroke-width="1"/>
<text x="686.1" y="86.1" font-size="13.8" font-weight="normal" fill="#1f2528" text-anchor="start" textLength="85.8" lengthAdjust="spacing" >Color scheme</text>
<path d="M845.5,76.3 L849.7,80.89999999999999 L853.9000000000001,76.3" fill="none" stroke="#1c1c1c" stroke-width="1.75" stroke-linejoin="miter"/>
<rect x="686.5" y="98" width="168.3" height="24.4" fill="#fff" stroke="#6a6a6a" stroke-width="1"/>
<text x="693.1" y="115.4" font-size="13.8" font-weight="normal" fill="#1f2528" text-anchor="start" textLength="58.9" lengthAdjust="spacing" >Line Type</text>
<path d="M837.8,107.9 L842,112.5 L846.2,107.9" fill="none" stroke="#1c1c1c" stroke-width="1.75" stroke-linejoin="miter"/>
<rect x="686.5" y="139.6" width="25" height="24.8" fill="#fff" stroke="#4a4a4a" stroke-width="1"/>
<path d="M694.6,152.2 L697.6,155.0 L703,149.6" fill="none" stroke="#888" stroke-width="1.7"/>
<text x="719.2" y="156.9" font-size="13.8" font-weight="normal" fill="#1f2528" text-anchor="start" textLength="69.4" lengthAdjust="spacing" >Print core 1</text>
<rect x="686.5" y="166.5" width="25" height="24.8" fill="#fff" stroke="#4a4a4a" stroke-width="1"/>
<path d="M694.6,179.1 L697.6,181.9 L703,176.5" fill="none" stroke="#888" stroke-width="1.7"/>
<text x="719.2" y="183.8" font-size="13.8" font-weight="normal" fill="#1f2528" text-anchor="start" textLength="70.6" lengthAdjust="spacing" >Print core 2</text>
<rect x="686.5" y="193.2" width="25" height="24.8" fill="#fff" stroke="#4a4a4a" stroke-width="1"/>
<text x="717.9" y="211.1" font-size="13.8" font-weight="normal" fill="#1f2528" text-anchor="start" textLength="81.3" lengthAdjust="spacing" >Show Travels</text>
<rect x="842.9" y="199.5" width="11.7" height="12" fill="#0000ff" stroke="#c9c9c9" stroke-width="0.8"/>
<rect x="686.5" y="220.3" width="25" height="24.8" fill="#fff" stroke="#4a4a4a" stroke-width="1"/>
<path d="M694.6,232.9 L697.6,235.70000000000002 L703,230.3" fill="none" stroke="#888" stroke-width="1.7"/>
<text x="717.9" y="237.7" font-size="13.8" font-weight="normal" fill="#1f2528" text-anchor="start" textLength="87.5" lengthAdjust="spacing" >Show Helpers</text>
<rect x="842.9" y="226.6" width="11.7" height="12" fill="#00ffff" stroke="#c9c9c9" stroke-width="0.8"/>
<rect x="686.5" y="247.2" width="25" height="24.8" fill="#fff" stroke="#4a4a4a" stroke-width="1"/>
<path d="M694.6,259.8 L697.6,262.6 L703,257.2" fill="none" stroke="#888" stroke-width="1.7"/>
<text x="717.9" y="264.6" font-size="13.8" font-weight="normal" fill="#1f2528" text-anchor="start" textLength="68.4" lengthAdjust="spacing" >Show Shell</text>
<rect x="842.9" y="253.4" width="11.7" height="12" fill="#ff0000" stroke="#c9c9c9" stroke-width="0.8"/>
<rect x="686.5" y="274.2" width="25" height="24.8" fill="#fff" stroke="#4a4a4a" stroke-width="1"/>
<path d="M694.6,286.8 L697.6,289.6 L703,284.2" fill="none" stroke="#888" stroke-width="1.7"/>
<text x="717.9" y="291.4" font-size="13.8" font-weight="normal" fill="#1f2528" text-anchor="start" textLength="63.9" lengthAdjust="spacing" >Show Infill</text>
<rect x="842.9" y="280.4" width="11.7" height="12" fill="#ffb900" stroke="#c9c9c9" stroke-width="0.8"/>
<text x="686.6" y="318" font-size="13.8" font-weight="normal" fill="#1f2528" text-anchor="start" textLength="81.6" lengthAdjust="spacing" >Top / Bottom</text>
<rect x="842.9" y="307.6" width="11.7" height="12" fill="#ffff00" stroke="#c9c9c9" stroke-width="0.8"/>
<text x="686.6" y="344.6" font-size="13.8" font-weight="normal" fill="#1f2528" text-anchor="start" textLength="61.6" lengthAdjust="spacing" >Inner Wall</text>
<rect x="842.9" y="334.5" width="11.7" height="12" fill="#00ff00" stroke="#c9c9c9" stroke-width="0.8"/>
<path d="M678.7,388.6 L693.8,397 L678.7,405.4 Z" fill="#101010"/>
<line x1="720.2" y1="396.9" x2="861" y2="396.9" stroke="#7f7f7f" stroke-width="3.8" stroke-linecap="round"/>
<circle cx="861.3" cy="396.7" r="6.6" fill="#000"/>
<rect x="847.2" y="422.2" width="3.4" height="70" rx="1.7" fill="#fff" stroke="#9a9a9a" stroke-width="0.9"/>
<line x1="848.7" y1="491" x2="848.5" y2="669" stroke="#7f7f7f" stroke-width="3.8"/>
<path d="M776,479.3 L828,479.3 L838.6,491.4 L828,503.6 L776,503.6 Z" fill="#fff" stroke="#cdcdcd" stroke-width="1"/>
<text x="794.8" y="496.3" font-size="13.8" font-weight="normal" fill="#1f2528" text-anchor="start" textLength="21.6" lengthAdjust="spacing" >860</text>
<circle cx="848.9" cy="491.3" r="6.6" fill="#000"/>
<circle cx="848.3" cy="669.2" r="6.5" fill="#000"/>
<text x="745.2" y="788.8" font-size="12.9" font-weight="bold" fill="#1f2528" text-anchor="start" textLength="92.2" lengthAdjust="spacing" >UMS5_Exhaust</text>
<text x="726.2" y="815" font-size="13.2" font-weight="bold" fill="#1f2528" text-anchor="start" textLength="141.2" lengthAdjust="spacing" >94.9 x 84.9 x 123.2 mm</text>
<g transform="translate(858.8,784) rotate(45)" fill="#1e2226"><rect x="-2.9" y="-9.8" width="5.8" height="2.6" rx="0.8"/><rect x="-2.9" y="-6.3" width="5.8" height="10.3"/><path d="M-2.9,5 L2.9,5 L0,10 Z"/></g>
<rect x="5" y="71" width="52.1" height="52" fill="#20262a"/>
<rect x="5" y="136" width="52.1" height="311.4" fill="#20262a"/>
<rect x="5" y="461" width="52.1" height="103.8" fill="#20262a"/>
<path d="M16.5,107 L16.5,86.8 L22.8,86.8 L24.3,89.6 L37.6,89.6 L37.6,92.6" fill="none" stroke="#fff" stroke-width="1.2"/>
<path d="M23.4,92.9 L45.8,92.9 L38.7,107.3 L16.3,107.3 Z" fill="#fff"/>
<polygon points="21.4,149.4 40.0,149.4 36.4,158.0 42.9,174.3 18.6,174.3 25.1,158.0" fill="none" stroke="#575c5f" stroke-width="1.1"/>
<path d="M18.2,163.1 L27.5,163.1" stroke="#575c5f" stroke-width="1.2"/><path d="M27.1,160.2 L32.3,163.1 L27.1,166 Z" fill="#575c5f"/>
<polygon points="24.4,203.2 40.6,203.2 37.2,210.8 43.5,225.0 18.6,225.0 27.5,210.8" fill="none" stroke="#575c5f" stroke-width="1.1"/>
<polygon points="21.3,210.4 30.5,210.4 28.6,215.6 32.4,225.0 18.5,225.0 23.0,215.6" fill="#575c5f" stroke="#575c5f" stroke-width="1.1"/>
<polygon points="21.9,253.7 40.0,253.7 36.2,263.2 43.5,278.4 18.5,278.4 25.7,263.2" fill="none" stroke="#575c5f" stroke-width="1.1"/>
<path d="M22.8,258.6 C16,260.5 16,266 24.5,268.2 M39,258.6 C46,260.5 46,266 37.6,267.6" fill="none" stroke="#575c5f" stroke-width="1.1"/><path d="M26.7,265.7 L32.4,268.4 L26.7,271.2 Z" fill="#575c5f"/>
<polygon points="22.5,307.1 39.1,307.1 35.5,316.5 42.3,328.3 20.0,328.3 26.7,316.5" fill="none" stroke="#575c5f" stroke-width="1.1"/>
<polygon points="30.9,307.1 39.1,307.1 35.5,316.5 42.3,328.3 30.9,328.3" fill="#575c5f" stroke="#575c5f" stroke-width="1.1"/>
<line x1="30.9" y1="304" x2="30.9" y2="331.5" stroke="#575c5f" stroke-width="1.2"/>
<polygon points="29.3,354.3 44.3,354.3 41.4,362.9 46.9,375.0 27.0,375.0 32.0,362.9" fill="#575c5f" stroke="#575c5f" stroke-width="1.1"/>
<polygon points="22.1,359.4 38.6,359.4 35.7,367.2 42.4,381.4 20.0,381.4 25.0,367.2" fill="#20262a" stroke="#575c5f" stroke-width="1.1"/>
<polygon points="18.3,366.0 32.9,366.0 30.0,374.3 35.7,385.7 15.0,385.7 20.7,374.3" fill="#575c5f" stroke="#575c5f" stroke-width="1.1"/>
<rect x="18.4" y="409.4" width="9.2" height="24.9" fill="none" stroke="#575c5f" stroke-width="1.1"/>
<path d="M27.6,417.9 L35,417.9 L35,425.7 L43.7,425.7 L43.7,434.9 L27.6,434.9 Z" fill="#575c5f"/>
<path d="M21.3,420.7 L24.7,424.3 M24.7,420.7 L21.3,424.3" stroke="#7a7f82" stroke-width="0.8"/>
<circle cx="31" cy="487.1" r="15" fill="none" stroke="#5a5f62" stroke-width="1.1"/>
<text x="31" y="491.70000000000005" font-size="12.5" font-weight="bold" fill="#9a9c9e" text-anchor="middle">1</text>
<circle cx="42.9" cy="477.8" r="4.6" fill="#5c4f2e"/>
<circle cx="31" cy="539.3" r="15" fill="none" stroke="#5a5f62" stroke-width="1.1"/>
<text x="31" y="543.9" font-size="12.5" font-weight="bold" fill="#9a9c9e" text-anchor="middle">2</text>
<circle cx="42.9" cy="530.0" r="4.6" fill="#5c4f2e"/>
</g>
</g>
</svg>
</body></html>
